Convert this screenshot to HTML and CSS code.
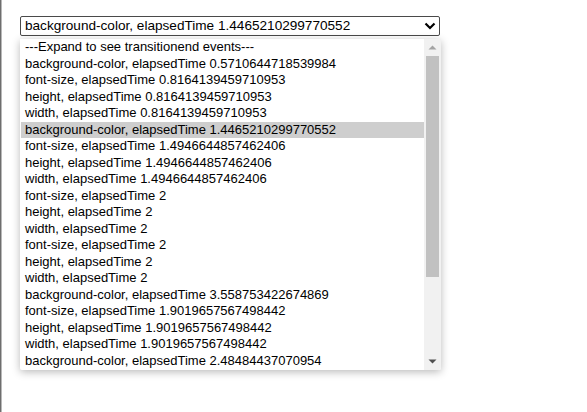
FILE: index.html
```html
<!DOCTYPE html>
<html>
<head>
<meta charset="utf-8">
<link rel="stylesheet" href="styles.css">
</head>
<body>
<div class="page">
  <div class="select">
    <span class="select-text">background-color, elapsedTime 1.4465210299770552</span>
    <svg class="chev" width="12" height="8" viewBox="0 0 12 8"><polyline points="1.5,1.5 6,6 10.5,1.5" fill="none" stroke="#000" stroke-width="2.2"/></svg>
  </div>
  <div class="popup">
    <ul class="list">
      <li>---Expand to see transitionend events---</li>
      <li>background-color, elapsedTime 0.5710644718539984</li>
      <li>font-size, elapsedTime 0.8164139459710953</li>
      <li>height, elapsedTime 0.8164139459710953</li>
      <li>width, elapsedTime 0.8164139459710953</li>
      <li class="sel">background-color, elapsedTime 1.4465210299770552</li>
      <li>font-size, elapsedTime 1.4946644857462406</li>
      <li>height, elapsedTime 1.4946644857462406</li>
      <li>width, elapsedTime 1.4946644857462406</li>
      <li>font-size, elapsedTime 2</li>
      <li>height, elapsedTime 2</li>
      <li>width, elapsedTime 2</li>
      <li>font-size, elapsedTime 2</li>
      <li>height, elapsedTime 2</li>
      <li>width, elapsedTime 2</li>
      <li>background-color, elapsedTime 3.558753422674869</li>
      <li>font-size, elapsedTime 1.9019657567498442</li>
      <li>height, elapsedTime 1.9019657567498442</li>
      <li>width, elapsedTime 1.9019657567498442</li>
      <li>background-color, elapsedTime 2.48484437070954</li>
    </ul>
    <div class="scrollbar">
      <div class="sb-btn"><svg width="9" height="5" viewBox="0 0 9 5"><polygon points="0.5,4.5 4.5,0.5 8.5,4.5" fill="#a3a3a3"/></svg></div>
      <div class="sb-track"><div class="sb-thumb"></div></div>
      <div class="sb-btn"><svg width="9" height="5" viewBox="0 0 9 5"><polygon points="0.5,0.5 8.5,0.5 4.5,4.5" fill="#505050"/></svg></div>
    </div>
  </div>
</div>
</body>
</html>
```

FILE: styles.css
```css
html, body {
  margin: 0;
  padding: 0;
  background: #fff;
}
.page {
  position: relative;
  width: 587px;
  height: 412px;
  box-sizing: border-box;
  border-left: 1px solid #6e6e6e;
  box-shadow: inset 1px 0 0 #b8b8b8;
  padding: 16px 0 0 19px;
  font-family: "Liberation Sans", Arial, sans-serif;
  color: #000;
}
.select {
  width: 420px;
  height: 20px;
  box-sizing: border-box;
  border: 1px solid #4a4a4a;
  border-radius: 2px;
  display: flex;
  align-items: center;
  justify-content: space-between;
  padding: 0 3px 0 4px;
  font-size: 13.6px;
}
.select-text {
  line-height: 16px;
}
.chev {
  display: block;
}
.popup {
  position: absolute;
  left: 19px;
  top: 39px;
  width: 421px;
  height: 331px;
  background: #fff;
  box-shadow: 0 2px 8px rgba(0,0,0,0.28);
  border-radius: 0 0 2px 2px;
  display: flex;
  overflow: hidden;
}
.list {
  list-style: none;
  margin: 0;
  padding: 0;
  flex: 1;
  font-size: 13px;
}
.list li {
  height: 16.5px;
  line-height: 16.5px;
  padding: 0 0 0 4px;
  white-space: nowrap;
  margin-left: 1px;
}
.list li.sel {
  background: #cecece;
}
.scrollbar {
  width: 17px;
  background: #f1f1f1;
  display: flex;
  flex-direction: column;
}
.sb-btn {
  height: 17px;
  display: flex;
  align-items: center;
  justify-content: center;
}
.sb-track {
  flex: 1;
  padding: 0 2px;
}
.sb-thumb {
  height: 221px;
  background: #c1c1c1;
}
```
